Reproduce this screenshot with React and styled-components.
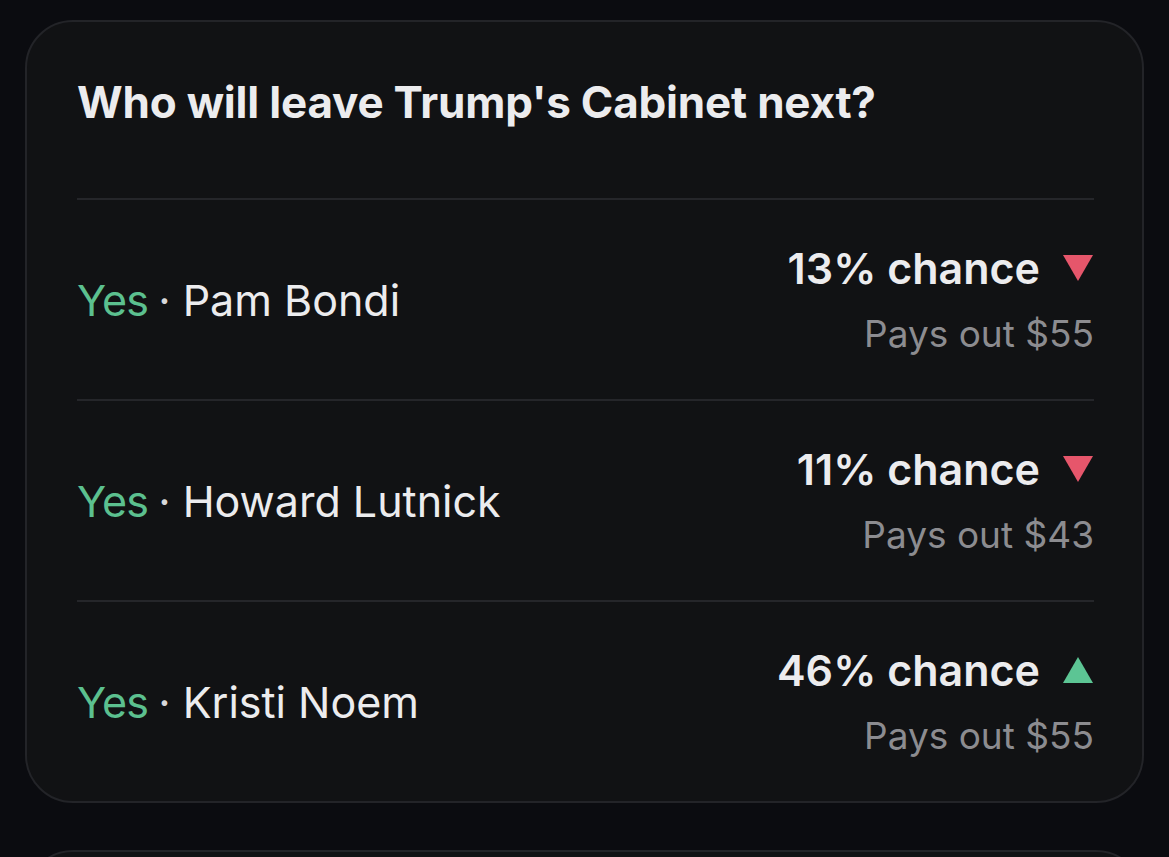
import React from "react";
import styled, { createGlobalStyle } from "styled-components";

const markets = [
  { name: "Pam Bondi", chance: 13, payout: 55, up: false },
  { name: "Howard Lutnick", chance: 11, payout: 43, up: false },
  { name: "Kristi Noem", chance: 46, payout: 55, up: true },
];

const Arrow = ({ up }) => (
  <svg width="32" height="28" viewBox="0 0 32 28">
    {up ? (
      <polygon points="16,1 31,27 1,27" fill="#5cc594" />
    ) : (
      <polygon points="1,1 31,1 16,27" fill="#e6566b" />
    )}
  </svg>
);

export default function App() {
  return (
    <>
      <GlobalStyle />
      <Page>
        <Card>
          <Title>Who will leave Trump's Cabinet next?</Title>
          <List>
            {markets.map((m) => (
              <Row key={m.name}>
                <Outcome>
                  <Yes>Yes</Yes>
                  <Dot>·</Dot>
                  <Name>{m.name}</Name>
                </Outcome>
                <Odds>
                  <Chance>
                    {m.chance}% chance
                    <Arrow up={m.up} />
                  </Chance>
                  <Payout>Pays out ${m.payout}</Payout>
                </Odds>
              </Row>
            ))}
          </List>
        </Card>
        <NextCard />
      </Page>
    </>
  );
}

const GlobalStyle = createGlobalStyle`
  body {
    margin: 0;
    background: #0b0c10;
    font-family: Inter, "Noto Sans", sans-serif;
    overflow: hidden;
  }
`;

const Page = styled.div`
  display: flex;
  flex-direction: column;
  gap: 47px;
  padding: 20px 25px 0;
  height: 857px;
  box-sizing: border-box;
  overflow: hidden;
`;

const Card = styled.div`
  flex-shrink: 0;
  background: #111214;
  border: 2px solid #232428;
  border-radius: 48px;
  padding: 56px 48px 0 50px;
`;

const NextCard = styled(Card)`
  height: 200px;
  padding: 0;
`;

const Title = styled.h2`
  margin: 0 0 72px;
  color: #ececee;
  font-size: 44px;
  font-weight: 700;
  letter-spacing: -0.2px;
  line-height: 48px;
`;

const List = styled.div`
  display: flex;
  flex-direction: column;
`;

const Row = styled.div`
  display: flex;
  justify-content: space-between;
  align-items: center;
  height: 201px;
  border-top: 2px solid #25262a;
  box-sizing: border-box;
`;

const Outcome = styled.div`
  display: flex;
  align-items: baseline;
  font-size: 43px;
`;

const Yes = styled.span`
  color: #5cc08f;
  letter-spacing: -0.8px;
`;

const Dot = styled.span`
  color: #d8d8da;
  margin: 0 12px 0 10px;
`;

const Name = styled.span`
  color: #ececee;
`;

const Odds = styled.div`
  display: flex;
  flex-direction: column;
  align-items: flex-end;
  gap: 19px;
`;

const Chance = styled.div`
  display: flex;
  align-items: center;
  gap: 22px;
  color: #ececee;
  font-size: 43px;
  font-weight: 600;
  line-height: 50px;
`;

const Payout = styled.div`
  color: #8c8c90;
  font-size: 37px;
  line-height: 44px;
`;
